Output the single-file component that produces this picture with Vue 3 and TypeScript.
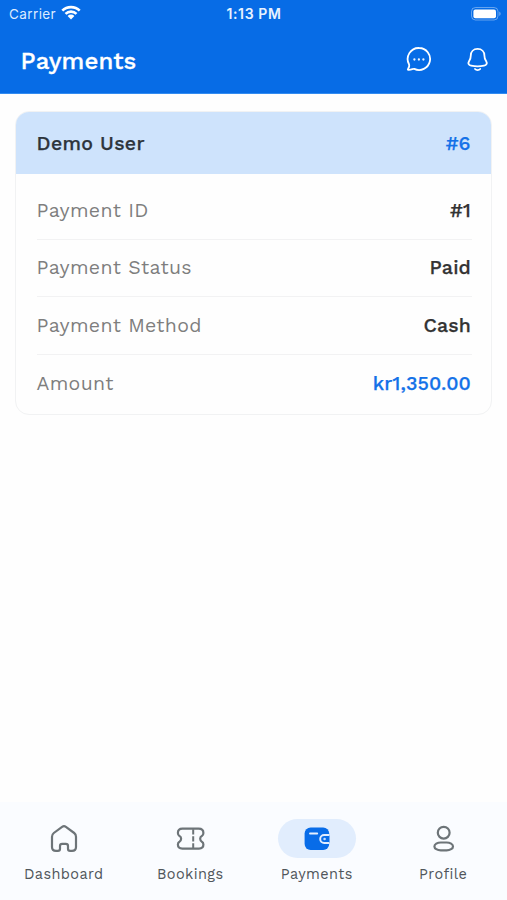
<script setup lang="ts">
interface Row {
  label: string
  value: string
  key: string
}

const rows: Row[] = [
  { label: 'Payment ID', value: '#1', key: 'payment-id' },
  { label: 'Payment Status', value: 'Paid', key: 'payment-status' },
  { label: 'Payment Method', value: 'Cash', key: 'payment-method' },
  { label: 'Amount', value: 'kr1,350.00', key: 'amount' },
]

const tabs: string[] = ['Dashboard', 'Bookings', 'Payments', 'Profile']
const active = 'Payments'
</script>

<template>
  <div class="screen">
    <header class="top">
      <div class="status">
        <div class="carrier">
          <span>Carrier</span>
          <svg width="20" height="16" viewBox="0 0 20 16">
            <g fill="none" stroke="#fff" stroke-width="2.6">
              <path d="M1.3 5.6C6 .9 14 .9 18.7 5.6" />
              <path d="M4.5 8.9C7.5 5.9 12.5 5.9 15.5 8.9" />
            </g>
            <path d="M6.6 10.9C8.6 9.1 11.4 9.1 13.4 10.9L10 14.4Z" fill="#fff" />
          </svg>
        </div>
        <div class="time">1:13 PM</div>
        <div class="power">
          <svg width="32" height="16" viewBox="0 0 32 16">
            <rect x="1.5" y="1.5" width="26.5" height="12.5" rx="4" fill="none" stroke="#fff" stroke-opacity=".38" />
            <rect x="3.4" y="3.4" width="22.6" height="8.9" rx="2" fill="#fff" />
            <path d="M29.3 5.6v4.4c1.8-.8 1.8-3.6 0-4.4Z" fill="#fff" fill-opacity=".45" />
          </svg>
        </div>
      </div>
      <div class="appbar">
        <h1>Payments</h1>
        <div class="actions">
          <svg width="28" height="28" viewBox="0 0 28 28">
            <path
              d="M14.2 3A11 11 0 1 1 9.3 23.9C8.2 23.4 6.4 25.2 3.4 24.9C2.8 24.8 2.7 24.2 3.1 23.7C4.3 22.1 4.5 20.8 4 19.2A11 11 0 0 1 14.2 3Z"
              fill="none" stroke="#fff" stroke-width="1.8" stroke-linejoin="round"
            />
            <g fill="#e9f3ff">
              <circle cx="9.4" cy="14.5" r="1.15" />
              <circle cx="13.9" cy="14.5" r="1.15" />
              <circle cx="18.4" cy="14.5" r="1.15" />
            </g>
          </svg>
          <svg width="28" height="28" viewBox="0 0 28 28">
            <g fill="none" stroke="#fff" stroke-width="1.8" stroke-linecap="round" stroke-linejoin="round">
              <path
                d="M13.6 3.9C9.4 3.9 6.8 6.8 6.8 10.4C6.8 13.5 6.3 14.2 5.1 16C3.6 18.5 4.8 20.1 7.2 20.7C11.4 21.7 15.8 21.7 20 20.7C22.4 20.1 23.6 18.5 22.1 16C20.9 14.2 20.4 13.5 20.4 10.4C20.4 6.8 17.8 3.9 13.6 3.9Z"
              />
              <path d="M11 24C12.2 25.4 15 25.4 16.2 24" />
            </g>
          </svg>
        </div>
      </div>
    </header>

    <main>
      <section class="card">
        <div class="card-head">
          <span class="name">Demo User</span>
          <span class="ref">#6</span>
        </div>
        <div class="card-body">
          <div v-for="row in rows" :key="row.key" class="row">
            <span class="label">{{ row.label }}</span>
            <span class="value" :class="row.key">{{ row.value }}</span>
          </div>
        </div>
      </section>
    </main>

    <nav>
      <div v-for="tab in tabs" :key="tab" class="tab">
        <div class="pill" :class="{ on: tab === active }">
          <svg width="32" height="32" viewBox="0 0 32 32">
            <g v-if="tab === 'Dashboard'" class="line">
              <path
                d="M14.1 3.8Q16 2.5 17.9 3.8L26.2 10Q28 11.4 28 13.8V24Q28 27.9 24 27.9H22.1Q20 27.9 20 25.8V23Q20 20.8 17.8 20.8H14.2Q12 20.8 12 23V25.8Q12 27.9 9.9 27.9H8Q4 27.9 4 24V13.8Q4 11.4 5.8 10Z"
              />
            </g>
            <g v-else-if="tab === 'Bookings'" class="line">
              <path
                d="M8 5.6H23.6Q28.4 5.6 28.4 10Q28.4 12.2 26.9 12.9C24.6 14.2 24.6 17.4 26.9 18.7Q28.4 19.5 28.4 21.6Q28.4 25.6 24 25.6H7.4Q2.9 25.6 2.9 21.6Q2.9 19.5 4.4 18.7C6.7 17.4 6.7 14.2 4.4 12.9Q2.9 12.2 2.9 10Q2.9 5.6 7.4 5.6Z"
              />
              <path class="perforation" d="M18.2 6.2V11.4M18.2 13.2V18.4M18.2 20.2V25.2" />
            </g>
            <g v-else-if="tab === 'Payments'">
              <rect x="3.6" y="4.6" width="24.6" height="22.4" rx="6" fill="#086ce8" />
              <path d="M9 10.5H16.2" stroke="#e5f0ff" stroke-width="1.9" stroke-linecap="round" />
              <path
                d="M28.4 12H23.2A4 4 0 0 0 23.2 20H28.4"
                fill="#086ce8" stroke="#e1edff" stroke-width="1.9"
              />
              <circle cx="23.6" cy="16" r="1.3" fill="#c5ddff" />
            </g>
            <g v-else class="line">
              <circle cx="15.7" cy="9.7" r="5.9" />
              <rect x="6.4" y="19.5" width="18.6" height="7.8" rx="6.4" ry="3.9" />
            </g>
          </svg>
        </div>
        <span class="tab-label">{{ tab }}</span>
      </div>
    </nav>
  </div>
</template>

<style>
body {
  margin: 0;
  background: #fefefe;
}
</style>

<style scoped>
.screen {
  width: 507px;
  height: 900px;
  display: flex;
  flex-direction: column;
  font-family: 'Work Sans', Inter, sans-serif;
  background: #fefefe;
}
svg {
  display: block;
  flex: none;
}
.top {
  height: 94px;
  box-sizing: border-box;
  background: #076ce6;
  border-bottom: 1px solid #328bf0;
  color: #fff;
}
.status {
  height: 28px;
  display: grid;
  grid-template-columns: 1fr auto 1fr;
  align-items: center;
  padding: 0 7px 0 9px;
  font-family: Inter, sans-serif;
  font-size: 13.5px;
}
.carrier {
  display: flex;
  align-items: center;
  gap: 5px;
  color: #dcebff;
  letter-spacing: 0.4px;
}
.carrier svg {
  margin-top: -2px;
}
.time {
  font-weight: 600;
  font-size: 14px;
  letter-spacing: 0.65px;
  color: #e8f2ff;
  margin: -2px 0 0 -1px;
}
.power {
  display: flex;
  justify-content: flex-end;
  margin: -1px -2px 0 0;
}
.appbar {
  height: 65px;
  display: flex;
  align-items: center;
  justify-content: space-between;
  padding: 0 15px 0 20.5px;
}
h1 {
  margin: 0;
  font-size: 24px;
  font-weight: 500;
  letter-spacing: 0.1px;
  -webkit-text-stroke: 0.3px currentColor;
}
.actions {
  display: flex;
  gap: 31px;
  margin-top: -3px;
}
main {
  flex: 1;
  padding: 17px 15px 0;
}
.card {
  border: 1.5px solid #f1f2f3;
  border-radius: 14px;
  overflow: hidden;
  height: 302px;
}
.card-head {
  height: 62px;
  display: flex;
  align-items: center;
  justify-content: space-between;
  padding: 0 20.5px 0 20.5px;
  background: #cee3fc;
  font-size: 19.5px;
  font-weight: 500;
  -webkit-text-stroke: 0.25px currentColor;
}
.name {
  color: #2d343b;
  letter-spacing: 0.35px;
}
.ref {
  color: #1371e8;
}
.card-body {
  padding: 8px 19px 0 20.5px;
}
.row {
  height: 57.5px;
  box-sizing: border-box;
  display: flex;
  align-items: center;
  justify-content: space-between;
  font-size: 19.5px;
  border-bottom: 1.5px solid #f2f2f3;
}
.row:last-child {
  border-bottom: none;
}
.label {
  color: #7e7e7e;
  letter-spacing: 0.33px;
}
.value {
  margin-right: 1px;
  color: #333;
  font-weight: 500;
  letter-spacing: 0.15px;
  -webkit-text-stroke: 0.25px currentColor;
}
.amount {
  color: #1371e8;
}
nav {
  height: 98px;
  box-sizing: border-box;
  padding-left: 1px;
  display: grid;
  grid-template-columns: repeat(4, 1fr);
  background: #fafcff;
}
.tab {
  display: flex;
  flex-direction: column;
  align-items: center;
  padding-top: 17px;
}
.pill {
  width: 78px;
  height: 39px;
  border-radius: 20px;
  display: flex;
  align-items: center;
  justify-content: center;
}
.pill.on {
  background: #e1edfd;
}
.line {
  fill: none;
  stroke: #6d7478;
  stroke-width: 2.2;
  stroke-linecap: round;
  stroke-linejoin: round;
}
.perforation {
  stroke-width: 2;
  stroke-linecap: butt;
}
.tab-label {
  margin: 8px 1px 0 0;
  font-size: 14.5px;
  line-height: 18px;
  color: #50565b;
  letter-spacing: 0.4px;
}
</style>
